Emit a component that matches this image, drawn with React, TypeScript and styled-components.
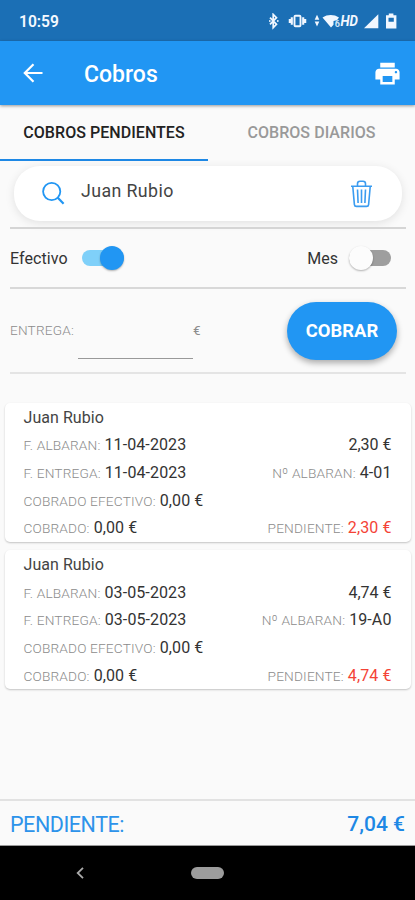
import React from "react";
import styled, { createGlobalStyle } from "styled-components";

const Global = createGlobalStyle`
  * { box-sizing: border-box; }
  body { margin: 0; background: #fafafa; font-family: Roboto, "Liberation Sans", sans-serif; }
`;

const Screen = styled.div`
  width: 415px;
  height: 900px;
  display: flex;
  flex-direction: column;
  background: #fafafa;
  overflow: hidden;
`;

const Label = styled.span<{ $size: number; $color: string; $weight?: number; $spacing?: number }>`
  font-size: ${(p) => p.$size}px;
  color: ${(p) => p.$color};
  font-weight: ${(p) => p.$weight ?? 400};
  letter-spacing: ${(p) => p.$spacing ?? 0}px;
  white-space: nowrap;
`;

const StatusBar = styled.div`
  height: 41px;
  flex: none;
  display: flex;
  align-items: center;
  justify-content: space-between;
  padding: 2px 16px 0 19px;
  background: #1b6fb5;
`;

const StatusIcons = styled.svg`
  display: block;
  width: 130px;
  height: 18px;
`;

const AppBar = styled.header`
  position: relative;
  height: 64px;
  flex: none;
  display: flex;
  align-items: center;
  padding: 0 13px 0 22px;
  background: #2196f3;
  box-shadow: 0 1px 3px rgba(0, 0, 0, 0.4);
`;

const BarTitle = styled.h1`
  flex: 1;
  margin: 4px 0 0 40px;
  font-size: 23px;
  font-weight: 500;
  line-height: 28px;
  color: #fff;
`;

const IconButton = styled.button`
  display: flex;
  padding: 0;
  border: 0;
  background: none;
`;

const Tabs = styled.nav`
  display: grid;
  grid-template-columns: 208px 207px;
  height: 56px;
  flex: none;
`;

const Tab = styled.div<{ $active?: boolean }>`
  display: flex;
  align-items: center;
  justify-content: center;
  padding-top: ${(p) => (p.$active ? 1 : 0)}px;
  border-bottom: ${(p) => (p.$active ? "2px solid #1e88e5" : "1px solid transparent")};
`;

const SearchBox = styled.div`
  flex: none;
  display: flex;
  align-items: center;
  height: 55px;
  margin: 5px 13px 0 14px;
  padding: 0 29px 0 28px;
  border-radius: 26px;
  background: #fff;
  box-shadow: 0 2px 10px rgba(0, 0, 0, 0.1);
`;

const SearchText = styled.div`
  flex: 1;
  padding: 0 0 7px 16px;
`;

const Divider = styled.hr<{ $gap?: number; $color: string }>`
  flex: none;
  width: 396px;
  height: 2px;
  margin: ${(p) => p.$gap ?? 0}px 0 0 10px;
  border: 0;
  background: ${(p) => p.$color};
`;

const SwitchRow = styled.div`
  flex: none;
  height: 58px;
  display: flex;
  align-items: center;
  justify-content: space-between;
  padding: 0 24px 0 10px;
`;

const SwitchField = styled.div<{ $gap: number }>`
  display: flex;
  align-items: center;
  gap: ${(p) => p.$gap}px;
`;

const Rail = styled.div<{ $on?: boolean }>`
  width: 42px;
  height: 16px;
  display: flex;
  align-items: center;
  justify-content: ${(p) => (p.$on ? "flex-end" : "flex-start")};
  border-radius: 8px;
  background: ${(p) => (p.$on ? "#7fd0f9" : "#9e9e9e")};
`;

const Thumb = styled.div<{ $on?: boolean }>`
  flex: none;
  width: 24px;
  height: 24px;
  border-radius: 50%;
  background: ${(p) => (p.$on ? "#2196f3" : "#fcfcfc")};
  box-shadow: 0 1px 2px rgba(0, 0, 0, 0.3);
`;

const PaymentRow = styled.div`
  flex: none;
  height: 83px;
  display: flex;
  align-items: center;
  padding: 0 18px 0 10px;
`;

const PaymentLabel = styled(Label)`
  padding-bottom: 2px;
`;

const AmountField = styled.div`
  width: 115px;
  height: 56px;
  margin: 0 0 0 4px;
  border-bottom: 1px solid #999;
`;

const PayButton = styled.button`
  width: 110px;
  height: 58px;
  margin: 0 0 0 auto;
  padding: 0;
  border: 0;
  border-radius: 29px;
  background: #2196f3;
  box-shadow: 0 3px 6px rgba(0, 0, 0, 0.32);
  font-family: inherit;
`;

const CardList = styled.main`
  flex: 1;
  display: flex;
  flex-direction: column;
  gap: 8.5px;
  padding: 28.5px 4.5px 0 5px;
`;

const Card = styled.article`
  height: 139px;
  padding: 1px 19px 0 18.5px;
  border-radius: 5px;
  background: #fff;
  box-shadow: 0 1px 2px rgba(0, 0, 0, 0.22);
`;

const CardRow = styled.div`
  display: flex;
  align-items: center;
  justify-content: space-between;
  height: 27.6px;
`;

const Pair = styled.div`
  display: flex;
  align-items: baseline;
  gap: 4px;
`;

const Footer = styled.footer`
  flex: none;
  height: 47px;
  display: flex;
  align-items: center;
  justify-content: space-between;
  padding: 2px 10px 0;
  border-top: 2px solid #e2e2e2;
  border-bottom: 1px solid #999;
`;

const NavBar = styled.div`
  flex: none;
  height: 54px;
  display: grid;
  grid-template-columns: 191px 33px 1fr;
  align-items: center;
  background: #000;
`;

const BackGlyph = styled.svg`
  justify-self: end;
  margin-right: 107px;
`;

const HomePill = styled.div`
  height: 12px;
  border-radius: 6px;
  background: #9c9c9c;
`;

const GREY = "#8c8c8c";
const DARK = "#333";

type Item = { shipped: string; delivered: string; amount: string; number: string };

const items: Item[] = [
  { shipped: "11-04-2023", delivered: "11-04-2023", amount: "2,30 €", number: "4-01" },
  { shipped: "03-05-2023", delivered: "03-05-2023", amount: "4,74 €", number: "19-A0" },
];

function Field({ name, value, color = DARK }: { name: string; value: string; color?: string }) {
  return (
    <Pair>
      <Label $size={13.7} $color={GREY} $weight={300} $spacing={0.15}>{name}</Label>
      <Label $size={16} $color={color} $spacing={0.1}>{value}</Label>
    </Pair>
  );
}

function DeliveryCard({ item }: { item: Item }) {
  return (
    <Card>
      <CardRow><Label $size={16} $color="#444" $spacing={0.05}>Juan Rubio</Label></CardRow>
      <CardRow>
        <Field name="F. ALBARAN:" value={item.shipped} />
        <Label $size={16} $color={DARK}>{item.amount}</Label>
      </CardRow>
      <CardRow>
        <Field name="F. ENTREGA:" value={item.delivered} />
        <Field name="Nº ALBARAN:" value={item.number} />
      </CardRow>
      <CardRow><Field name="COBRADO EFECTIVO:" value="0,00 €" /></CardRow>
      <CardRow>
        <Field name="COBRADO:" value="0,00 €" />
        <Field name="PENDIENTE:" value={item.amount} color="#f44336" />
      </CardRow>
    </Card>
  );
}

function Toggle({ on }: { on?: boolean }) {
  return <Rail $on={on}><Thumb $on={on} /></Rail>;
}

export default function App() {
  return (
    <>
      <Global />
      <Screen>
        <StatusBar>
          <Label $size={15.6} $color="#f4f9ff" $weight={600}>10:59</Label>
          <StatusIcons viewBox="0 0 130 18" fill="none" stroke="#f1f7ff">
            <path d="M1 4.7 7.5 11.3l-3.3 3.3V1.4l3.3 3.3L1 11.3" strokeWidth="1.7" />
            <circle cx=".8" cy="8" r=".9" fill="#f1f7ff" stroke="none" />
            <circle cx="8.8" cy="8" r=".9" fill="#f1f7ff" stroke="none" />
            <rect x="25.5" y="2.8" width="6" height="10.4" rx="1" strokeWidth="1.9" />
            <path d="M22.8 4.3v7.4M34.2 4.3v7.4M20.8 6v4M36.2 6v4" strokeWidth="2.1" />
            <path d="m48 1.8 2.3 5h-4.6zM48 13.4l2.3-5h-4.6z" fill="#f1f7ff" stroke="none" />
            <path d="M53.5 4.5c5-3.3 11.5-3.3 16.5 0l-2 2.7-3.5.8v3.8L62 14.5z" fill="#f1f7ff" stroke="none" />
            <text x="65.7" y="14.2" fontSize="9" fontWeight="700" fill="#cfe5f8" stroke="none">6</text>
            <text x="71.5" y="13.2" fontSize="14" textLength="17.5" lengthAdjust="spacingAndGlyphs" fontStyle="italic" fontWeight="700" fill="#f1f7ff" stroke="none">HD</text>
            <path d="M109.3 1.3v14H95z" fill="#f1f7ff" stroke="none" />
            <path d="M119.8.5h4.6v1.8h3v13.2H117V2.3h2.8zM119.5 4.8v4h5.3v-4z" fillRule="evenodd" fill="#f1f7ff" stroke="none" />
          </StatusIcons>
        </StatusBar>
        <AppBar>
          <IconButton aria-label="Volver">
            <svg width="22" height="22" viewBox="0 0 22 22" fill="none" stroke="#fff" strokeWidth="2.2">
              <path d="M20.5 11H3M11.5 2.3 2.8 11l8.7 8.7" />
            </svg>
          </IconButton>
          <BarTitle>Cobros</BarTitle>
          <IconButton aria-label="Imprimir">
            <svg width="29" height="29" viewBox="0 0 24 24" fill="#fff">
              <path d="M19 8H5c-1.66 0-3 1.34-3 3v6h4v4h12v-4h4v-6c0-1.66-1.34-3-3-3zm-3 11H8v-5h8v5zm3-7c-.55 0-1-.45-1-1s.45-1 1-1 1 .45 1 1-.45 1-1 1zm-1-9H6v4h12V3z" />
            </svg>
          </IconButton>
        </AppBar>
        <Tabs>
          <Tab $active><Label $size={16} $color="#222" $weight={500} $spacing={0.05}>COBROS PENDIENTES</Label></Tab>
          <Tab><Label $size={16} $color="#999" $weight={500} $spacing={0.05}>COBROS DIARIOS</Label></Tab>
        </Tabs>
        <SearchBox>
          <svg width="23" height="24" viewBox="0 0 23 24" fill="none" stroke="#2196f3" strokeWidth="1.8">
            <circle cx="9.7" cy="9.5" r="8.6" />
            <path d="m15.8 15.7 5.8 6" strokeWidth="2.2" />
          </svg>
          <SearchText><Label $size={17.8} $color="#444" $spacing={0.4}>Juan Rubio</Label></SearchText>
          <svg width="23" height="28" viewBox="0 0 23 28" fill="none" stroke="#3b9cf0" strokeWidth="1.6">
            <path d="M1 6.3h21M7.5 6V3.8C7.5 2 8.3 1.3 10 1.3h3c1.7 0 2.5.7 2.5 2.5V6" />
            <path d="M2.8 6.7 4.4 24.6c.1 1.2.8 1.8 2 1.8h10.2c1.2 0 1.9-.6 2-1.8l1.6-17.9M7.5 9.5l.6 13.5M11.5 9.5V23M15.5 9.5 14.9 23" />
          </svg>
        </SearchBox>
        <Divider $gap={6} $color="#d5d5d5" />
        <SwitchRow>
          <SwitchField $gap={14}>
            <Label $size={16} $color={DARK} $spacing={0.08}>Efectivo</Label>
            <Toggle on />
          </SwitchField>
          <SwitchField $gap={11}>
            <Label $size={16} $color={DARK}>Mes</Label>
            <Toggle />
          </SwitchField>
        </SwitchRow>
        <Divider $color="#d8d8d8" />
        <PaymentRow>
          <PaymentLabel $size={13.6} $color={GREY} $weight={300} $spacing={0.2}>ENTREGA:</PaymentLabel>
          <AmountField />
          <PaymentLabel $size={13.5} $color={GREY}>€</PaymentLabel>
          <PayButton><Label $size={18.4} $color="#fff" $weight={700}>COBRAR</Label></PayButton>
        </PaymentRow>
        <Divider $color="#e4e4e4" />
        <CardList>
          {items.map((item) => <DeliveryCard key={item.number} item={item} />)}
        </CardList>
        <Footer>
          <Label $size={21.5} $color="#2d93ea" $spacing={-0.45}>PENDIENTE:</Label>
          <Label $size={21} $color="#1e88e5" $weight={500}>7,04 €</Label>
        </Footer>
        <NavBar>
          <BackGlyph width="8" height="12" viewBox="0 0 8 12" fill="none" stroke="#aaa" strokeWidth="1.8">
            <path d="M7 .8 1.7 6 7 11.2" />
          </BackGlyph>
          <HomePill />
        </NavBar>
      </Screen>
    </>
  );
}
